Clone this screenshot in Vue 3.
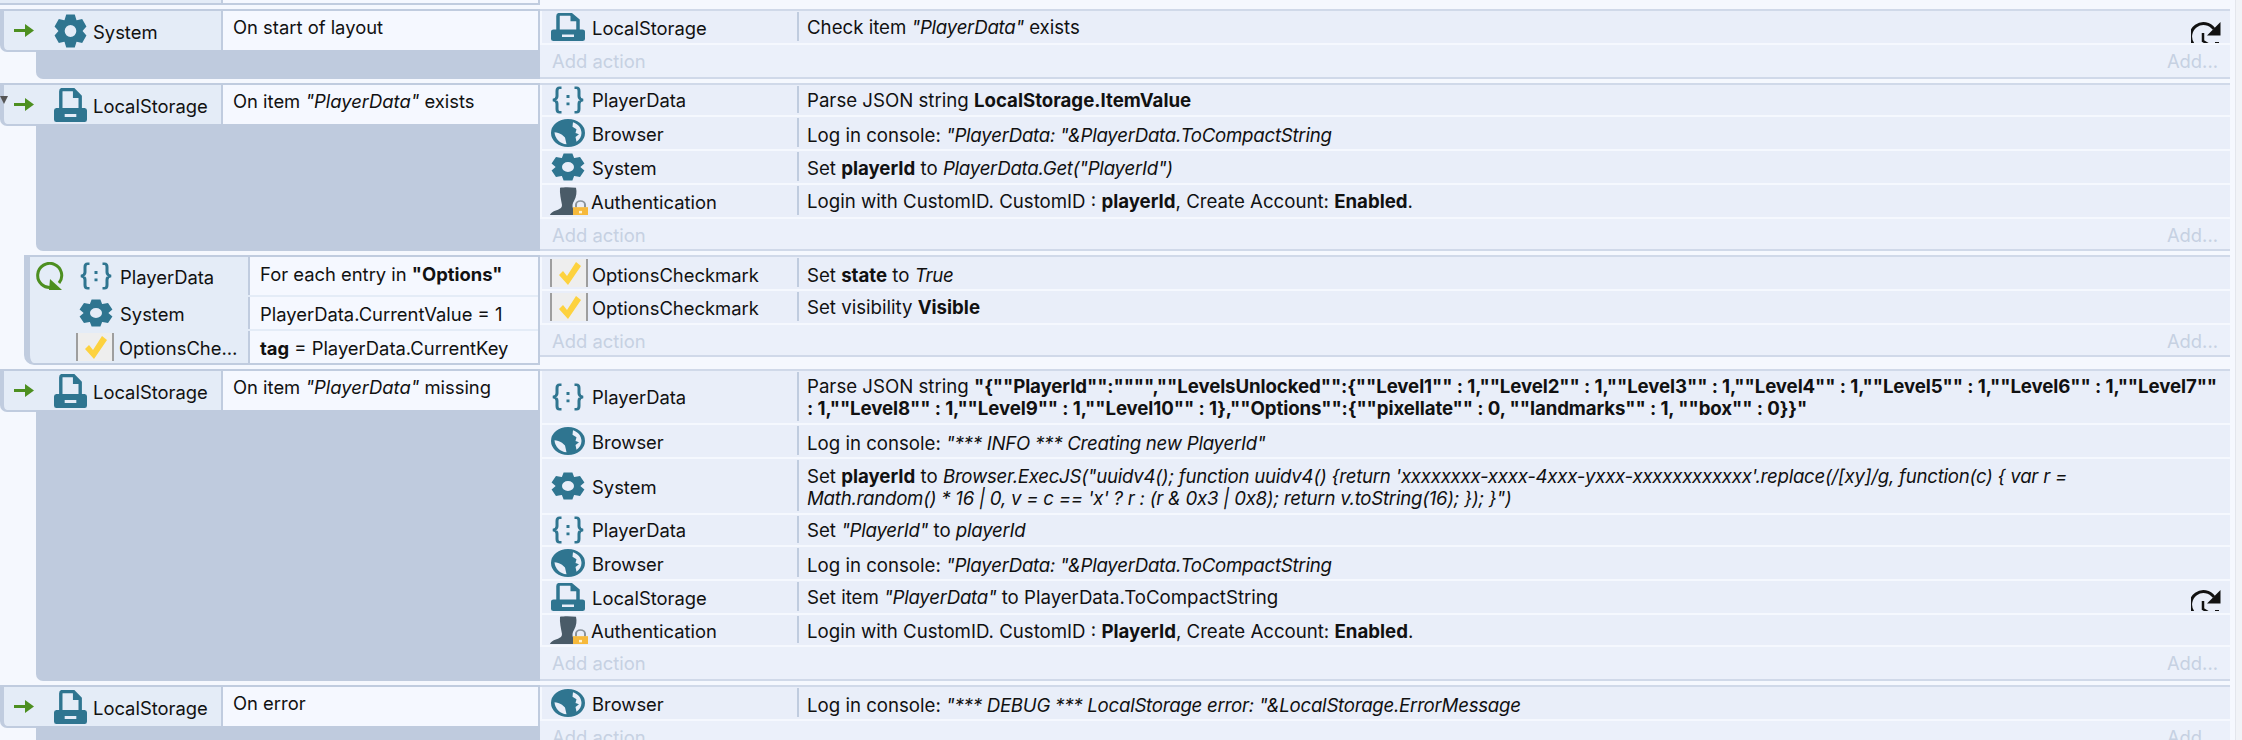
<script setup>
const gearPath = (() => {
  const pt = (deg, r) => {
    const a = (deg * Math.PI) / 180
    return `${(17 + r * Math.cos(a)).toFixed(2)} ${(17 + r * Math.sin(a)).toFixed(2)}`
  }
  let d = ''
  for (let i = 0; i < 6; i++) {
    const a = -90 + i * 60
    d += `${i ? 'L' : 'M'}${pt(a - 29, 12.6)} L${pt(a - 15, 17)} L${pt(a + 15, 17)} L${pt(a + 29, 12.6)} `
  }
  return d + 'Z M17 11 A6 6 0 1 0 17 23 A6 6 0 1 0 17 11 Z'
})()

const ACT = {
  ls: { icon: 'ls', name: 'LocalStorage' },
  pd: { icon: 'braces', name: 'PlayerData' },
  br: { icon: 'globe', name: 'Browser' },
  sy: { icon: 'gear', name: 'System' },
  au: { icon: 'auth', name: 'Authentication' },
  op: { icon: 'check', name: 'OptionsCheckmark' }
}
const row = (o, h, text, reload) => ({ ...ACT[o], h, text, reload })

const blocks = [
  {
    kind: 'event', icon: 'gear', obj: 'System', cond: 'On start of layout', addH: 32,
    rows: [row('ls', 32, 'Check item <i>"PlayerData"</i> exists', 11)]
  },
  {
    kind: 'event', icon: 'ls', obj: 'LocalStorage', cond: 'On item <i>"PlayerData"</i> exists', addH: 30, tri: true,
    rows: [
      row('pd', 30, 'Parse JSON string <b>LocalStorage.ItemValue</b>'),
      row('br', 32, 'Log in console: <i>"PlayerData: "&amp;PlayerData.ToCompactString</i>'),
      row('sy', 32, 'Set <b>playerId</b> to <i>PlayerData.Get("PlayerId")</i>'),
      row('au', 32, 'Login with CustomID. CustomID : <b>playerId</b>, Create Account: <b>Enabled</b>.')
    ]
  },
  {
    kind: 'sub', addH: 30,
    conds: [
      { h: 38, icon: 'braces', obj: 'PlayerData', text: 'For each entry in <b>"Options"</b>', loop: true },
      { h: 32, icon: 'gear', obj: 'System', text: 'PlayerData.CurrentValue = 1' },
      { h: 32, icon: 'check', obj: 'OptionsCheckmark', text: '<b>tag</b> = PlayerData.CurrentKey' }
    ],
    rows: [
      row('op', 32, 'Set <b>state</b> to <i>True</i>'),
      row('op', 32, 'Set visibility <b>Visible</b>')
    ]
  },
  {
    kind: 'event', icon: 'ls', obj: 'LocalStorage', cond: 'On item <i>"PlayerData"</i> missing', addH: 32,
    rows: [
      row('pd', 52, 'Parse JSON string <b class="tight">"{""PlayerId"":"""",""LevelsUnlocked"":{""Level1"" : 1,""Level2"" : 1,""Level3"" : 1,""Level4"" : 1,""Level5"" : 1,""Level6"" : 1,""Level7""<br>: 1,""Level8"" : 1,""Level9"" : 1,""Level10"" : 1},""Options"":{""pixellate"" : 0, ""landmarks"" : 1, ""box"" : 0}}"</b>'),
      row('br', 32, 'Log in console: <i>"*** INFO *** Creating new PlayerId"</i>'),
      row('sy', 54, `Set <b>playerId</b> to <i>Browser.ExecJS("uuidv4(); function uuidv4() {return 'xxxxxxxx-xxxx-4xxx-yxxx-xxxxxxxxxxxx'.replace(/[xy]/g, function(c) { var r =<br>Math.random() * 16 | 0, v = c == 'x' ? r : (r &amp; 0x3 | 0x8); return v.toString(16); }); }")</i>`),
      row('pd', 30, 'Set <i>"PlayerId"</i> to <i>playerId</i>'),
      row('br', 32, 'Log in console: <i>"PlayerData: "&amp;PlayerData.ToCompactString</i>'),
      row('ls', 32, 'Set item <i>"PlayerData"</i> to PlayerData.ToCompactString', 9),
      row('au', 30, 'Login with CustomID. CustomID : <b>PlayerId</b>, Create Account: <b>Enabled</b>.')
    ]
  },
  {
    kind: 'event', icon: 'ls', obj: 'LocalStorage', cond: 'On error', addH: 32,
    rows: [row('br', 32, 'Log in console: <i>"*** DEBUG *** LocalStorage error: "&amp;LocalStorage.ErrorMessage</i>')]
  }
]
</script>

<template>
  <div class="sheet">
    <svg class="defs" width="0" height="0" aria-hidden="true">
      <defs>
        <symbol id="gear" viewBox="0 0 34 34" preserveAspectRatio="none">
          <path :d="gearPath" fill="#2f7590" fill-rule="evenodd" />
        </symbol>
        <symbol id="ls" viewBox="0 0 34 34" preserveAspectRatio="none">
          <path d="M7 21V3.500A2 2 0 0 1 9 1.500H20L27 8.500V21" fill="none" stroke="#2f7590" stroke-width="3.500" />
          <path d="M19.500 1.500V10H27.500Z" fill="#2f7590" />
          <path fill-rule="evenodd" fill="#2f7590" d="M2.500 20H31.500A2.500 2.500 0 0 1 34 22.500V31.500A2.500 2.500 0 0 1 31.500 34H2.500A2.500 2.500 0 0 1 0 31.500V22.500A2.500 2.500 0 0 1 2.500 20ZM11 26V29H23V26Z" />
        </symbol>
        <symbol id="braces" viewBox="0 0 34 34" preserveAspectRatio="none">
          <path d="M10.500 2H8.500C6.500 2 6 3.500 6 6V12.500C6 15 4.500 16.500 2 17C4.500 17.500 6 19 6 21.500V28C6 30.500 6.500 32 8.500 32H10.500M23.500 2H25.500C27.500 2 28 3.500 28 6V12.500C28 15 29.500 16.500 32 17C29.500 17.500 28 19 28 21.500V28C28 30.500 27.500 32 25.500 32H23.500" fill="none" stroke="#2f7590" stroke-width="3" />
          <path d="M15.500 11h3v3.500h-3zM15.500 20h3v3.500h-3z" fill="#2f7590" />
        </symbol>
        <symbol id="globe" viewBox="0 0 34 34" preserveAspectRatio="none">
          <path fill="#2f7590" fill-rule="evenodd" d="M17 0A17 17 0 1 0 17 34A17 17 0 1 0 17 0ZM3.500 16C6 16.500 8.500 17 11 19L14 22.500L15.500 30.800C9 29.800 4 24 3.500 16ZM22 4C27 6 30.500 11 30.500 17C30.500 21.500 28.500 25 25.500 27.500L24.500 22L28 18.500L24.500 17L25.500 12.500L21.500 9.500Z" />
        </symbol>
        <symbol id="auth" viewBox="0 0 38 34" preserveAspectRatio="none">
          <path fill="#4a5b68" d="M10 1C14 0 20 0 26 1C27 6 26.500 12 24 17C22.500 20 22 23 23 26L23 34H0C0.500 31 4 29 8 27.500C10.500 26.500 12 25 12 22C11 15 9.500 8 10 1Z" />
          <path fill="none" stroke="#8a939b" stroke-width="2" d="M26 25V21.500A4.500 4.500 0 0 1 35 21.500V25" />
          <path fill="#f6b93b" d="M23 24.500H38V34H23Z" />
          <path fill="#fff3cf" d="M29 29h3v3h-3z" />
        </symbol>
        <symbol id="check" viewBox="0 0 38 28" preserveAspectRatio="none">
          <path fill="#eeeeee" d="M1 0H37V28H1Z" />
          <path fill="#9e9e9e" d="M0 0H2V28H0ZM36 0H38V28H36Z" />
          <path fill="#fdd23e" d="M9 16L13 12L17 17L26 3L31 7L18 26Z" />
        </symbol>
        <symbol id="arrow" viewBox="0 0 20 13">
          <path fill="#4d8f20" d="M0 5H11V0L20 6.500L11 13V8H0Z" />
        </symbol>
        <symbol id="loop" viewBox="0 0 28 28">
          <path fill="none" stroke="#4d8f20" stroke-width="3" d="M16 25.200A12 12 0 1 1 23 21" />
          <path fill="#4d8f20" d="M13 28L14 17L26 28Z" />
        </symbol>
        <symbol id="reload" viewBox="0 0 30 30">
          <path fill="none" stroke="#111" stroke-width="3" d="M2 22A12.500 12.500 0 0 1 23 7" />
          <path fill="#111" d="M29.500 0V13.500H16Z" />
          <path fill="none" stroke="#111" stroke-width="2.500" d="M12 11V19L17 22" />
          <path fill="#111" d="M24 20h4v4h-4z" />
        </symbol>
      </defs>
    </svg>

    <div class="stub"><span class="stub-left"></span><span class="stub-cond"></span></div>

    <div v-for="(b, bi) in blocks" :key="bi" class="block" :class="b.kind">
      <div v-if="b.kind === 'event'" class="left">
        <span v-if="b.tri" class="tri"></span>
        <div class="head">
          <div class="trigger">
            <svg class="slot-arrow"><use href="#arrow" /></svg>
            <svg class="big-icon"><use :href="'#' + b.icon" /></svg>
            <span class="obj">{{ b.obj }}</span>
          </div>
          <div class="cond" v-html="b.cond"></div>
        </div>
        <div class="below"></div>
      </div>

      <div v-else class="left">
        <div v-for="(c, ci) in b.conds" :key="ci" class="subrow" :style="{ height: c.h + 'px' }">
          <div class="subtrigger">
            <span class="loop-slot"><svg v-if="c.loop" class="loop"><use href="#loop" /></svg></span>
            <svg class="sub-icon" :class="c.icon"><use :href="'#' + c.icon" /></svg>
            <span class="obj subobj">{{ c.obj }}</span>
          </div>
          <div class="cond subcond" v-html="c.text"></div>
        </div>
      </div>

      <div class="actions">
        <div v-for="(r, ri) in b.rows" :key="ri" class="action" :class="r.icon" :style="{ height: r.h + 'px' }">
          <div class="a-obj">
            <svg class="a-icon" :class="r.icon"><use :href="'#' + r.icon" /></svg>
            <span class="a-name">{{ r.name }}</span>
          </div>
          <div class="a-param" v-html="r.text"></div>
          <span v-if="r.reload" class="reload" :style="{ top: r.reload + 'px' }"><svg><use href="#reload" /></svg></span>
        </div>
        <div class="add" :style="{ height: b.addH + 'px' }">
          <span>Add action</span><span>Add...</span>
        </div>
      </div>
    </div>
    <div class="edge"></div>
  </div>
</template>

<style scoped>
.sheet {
  position: relative;
  width: 2242px;
  height: 740px;
  overflow: hidden;
  background: #f5f8fe;
  font-family: Inter, "Liberation Sans", sans-serif;
  font-size: 18.4px;
  line-height: 22px;
  color: #111;
}
.defs { position: absolute; }
.edge {
  position: absolute;
  top: 0;
  bottom: 0;
  left: 2235px;
  width: 7px;
  background: #f1f3f7;
  border-left: 1px solid #e3e6ec;
}
.stub { display: flex; height: 5px; width: 540px; box-sizing: border-box; border-bottom: 2px solid #c0ccdf; }
.stub-left { width: 223px; background: #e4ecf7; border-right: 2px solid #c0ccdf; box-sizing: border-box; }
.stub-cond { flex: 1; background: #f5f8ff; border-right: 2px solid #c0ccdf; }

.block { display: flex; width: 2230px; margin-top: 4px; align-items: flex-start; }
.left { position: relative; width: 540px; flex: none; box-sizing: border-box; }
.event .left { align-self: stretch; display: flex; flex-direction: column; border-top: 2px solid #c0ccdf; }

.tri {
  position: absolute;
  left: 0;
  top: 11px;
  border: 4px solid transparent;
  border-top: 8px solid #555;
  border-bottom: 0;
  width: 0;
  height: 0;
}
.head { display: flex; height: 41px; flex: none; }
.trigger {
  width: 223px;
  box-sizing: border-box;
  display: flex;
  align-items: center;
  background: #e4ecf7;
  border-left: 4px solid #c0ccdf;
  border-bottom: 2px solid #c0ccdf;
  border-right: 2px solid #c0ccdf;
  border-bottom-left-radius: 7px;
  padding-left: 10px;
}
.slot-arrow { width: 20px; height: 13px; margin-right: 20px; flex: none; }
.big-icon { width: 33px; height: 34px; margin-right: 6px; flex: none; }
.obj { white-space: nowrap; overflow: hidden; text-overflow: ellipsis; position: relative; top: 1px; }
.cond { flex: 1; background: #f5f8ff; padding: 5px 10px 0; box-sizing: border-box; border-right: 2px solid #c0ccdf; white-space: nowrap; }
.below { flex: 1; margin-left: 36px; background: #bfcbde; border-bottom-left-radius: 7px; margin-top: -2px; }

.sub .left {
  margin-left: 24px;
  width: 516px;
  border: 2px solid #c0ccdf;
  border-left-width: 6px;
  border-bottom-left-radius: 10px;
  border-right-width: 2px;
  background: #e4ecf7;
  display: flex;
  flex-direction: column;
  gap: 2px;
}
.subrow { display: flex; }
.subtrigger {
  width: 220px;
  box-sizing: border-box;
  display: flex;
  align-items: center;
  border-right: 2px solid #c0ccdf;
  padding-left: 6px;
}
.loop-slot { width: 28px; height: 28px; margin-right: 15px; flex: none; }
.loop { width: 28px; height: 28px; display: block; }
.sub-icon { width: 34px; height: 28px; flex: none; margin-right: 7px; }
.sub-icon.check { width: 38px; margin-left: -3px; margin-right: 5px; }
.subobj { width: 122px; flex: none; }
.subcond { padding-top: 6px; padding-left: 10px; border-right: 0; }

.actions { flex: 1; min-width: 0; display: flex; flex-direction: column; gap: 2px; border-top: 2px solid #d0d9e9; border-bottom: 2px solid #d0d9e9; }
.action { position: relative; display: flex; margin-left: 2px; background: #e9eef9; }
.a-obj { width: 255px; flex: none; display: flex; align-items: center; padding-left: 9px; box-sizing: border-box; }
.a-icon { width: 34px; height: 28px; flex: none; margin-right: 7px; }
.a-icon.auth { width: 38px; margin-left: -1px; margin-right: 3px; }
.a-icon.check { width: 38px; margin-left: -1px; margin-right: 4px; }
.a-name { position: relative; top: 1px; }
.action.braces .a-name { top: 0; }
.action.check:first-child .a-name { top: 2px; }
.a-param {
  flex: 1;
  min-width: 0;
  margin: 1px 0 2px;
  padding: 3px 8px 0 8px;
  border-left: 2px solid #c0ccdf;
  font-size: 18.65px;
  white-space: nowrap;
}
.action.globe .a-param { padding-top: 6px; }
.action.gear .a-param { padding-top: 5px; }
.action.auth .a-param, .action.ls .a-param, .action.check .a-param { padding-top: 4px; }
.action.check:first-child .a-param { padding-top: 6px; }
.a-param :deep(i) { letter-spacing: -0.25px; }
.a-param :deep(.tight) { letter-spacing: -0.09px; }
.reload { position: absolute; right: 9px; width: 30px; height: 21px; overflow: hidden; }
.reload svg { width: 30px; height: 30px; display: block; }
.add {
  display: flex;
  justify-content: space-between;
  padding: 5px 12px 0 12px;
  box-sizing: border-box;
  background: #ebf0fa;
  color: #c6d1e2;
}
</style>

<style>
html, body { margin: 0; overflow: hidden; background: #f5f8fe; }
</style>
